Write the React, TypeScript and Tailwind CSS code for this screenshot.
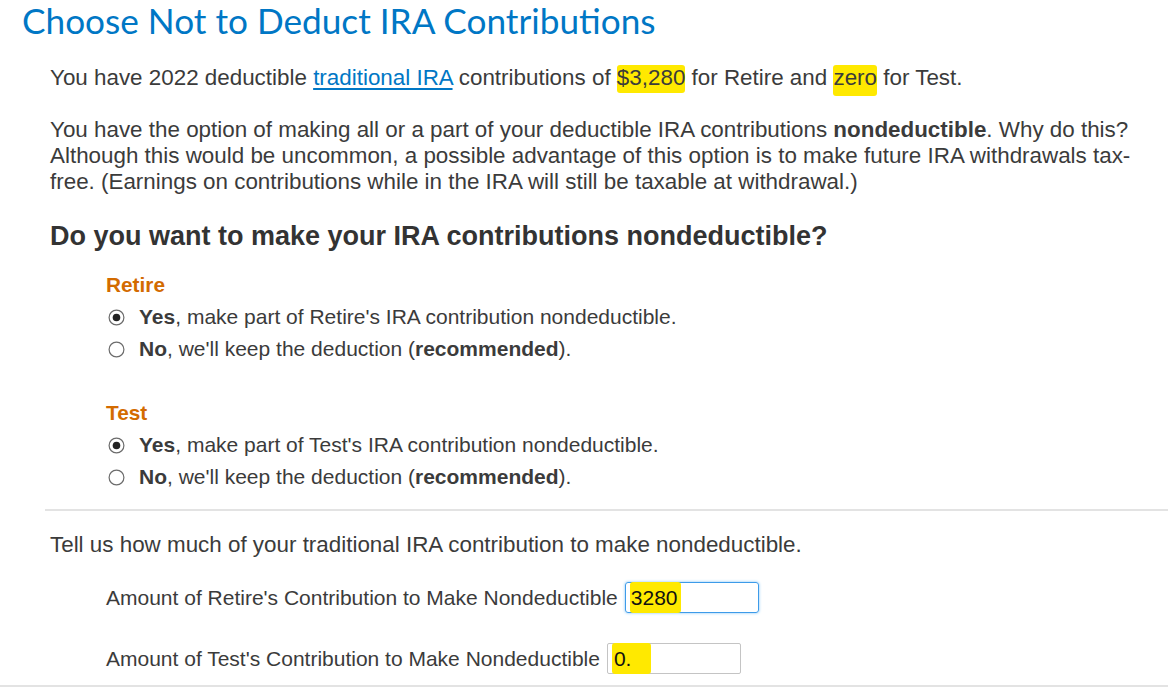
import React from "react"

const body = "font-['Liberation_Sans',Arial,sans-serif] text-[#3b3b3b]"

function Mark({ children, className = "" }: { children: React.ReactNode; className?: string }) {
  return <span className={`bg-[#ffe900] rounded-[3px] ${className}`}>{children}</span>
}

function Radio({ checked }: { checked: boolean }) {
  return (
    <svg width="17" height="17" viewBox="0 0 17 17" className="shrink-0">
      <circle cx="8.5" cy="8.5" r="7.4" fill="#fff" stroke="#6b6b6b" strokeWidth="1.2" />
      {checked && <circle cx="8.5" cy="8.5" r="3.8" fill="#222" />}
    </svg>
  )
}

function Choice({ name, yes }: { name: string; yes: boolean }) {
  return (
    <div className="pl-[106px]">
      <div className="text-[20.8px] leading-[24px] font-bold text-[#d36b00]">{name}</div>
      <div className="mt-[4px] flex flex-col">
        <div className="h-[32px] flex items-center gap-[14px] pl-[2px]">
          <Radio checked={yes} />
          <span className="text-[21px]">
            <b>Yes</b>, make part of {name}'s IRA contribution nondeductible.
          </span>
        </div>
        <div className="h-[32px] flex items-center gap-[14px] pl-[2px]">
          <Radio checked={!yes} />
          <span className="text-[21px]">
            <b>No</b>, we'll keep the deduction (<b>recommended</b>).
          </span>
        </div>
      </div>
    </div>
  )
}

export default function App() {
  return (
    <div className={`w-[1168px] h-[688px] bg-white overflow-hidden ${body}`}>
      <h1 className="pl-[22px] h-[40px] text-[35.2px] leading-[40px] text-[#0077c5] font-['Lato',sans-serif]">
        Choose Not to Deduct IRA Contributions
      </h1>

      <div className="pl-[50px] pr-[20px]">
        <p className="mt-[25px] text-[22.4px] leading-[26px]">
          You have 2022 deductible{" "}
          <span className="text-[#0077c5] underline underline-offset-[3px]">traditional IRA</span>{" "}
          contributions of <Mark className="pb-[3px]">$3,280</Mark> for Retire and{" "}
          <Mark className="pb-[6px]">zero</Mark> for Test.
        </p>
        <p className="mt-[26px] text-[22.4px] leading-[26px]">
          You have the option of making all or a part of your deductible IRA contributions{" "}
          <b>nondeductible</b>. Why do this? Although this would be uncommon, a possible advantage of this
          option is to make future IRA withdrawals tax-free. (Earnings on contributions while in the IRA will
          still be taxable at withdrawal.)
        </p>
        <h2 className="mt-[26px] text-[27px] leading-[30px] font-bold text-[#333]">
          Do you want to make your IRA contributions nondeductible?
        </h2>
      </div>

      <div className="mt-[22px]">
        <Choice name="Retire" yes />
      </div>
      <div className="mt-[36px]">
        <Choice name="Test" yes />
      </div>

      <div className="mt-[16px] ml-[45px] h-[2px] bg-[#e3e3e3]" />

      <p className="mt-[21px] pl-[50px] text-[22.4px] leading-[26px]">
        Tell us how much of your traditional IRA contribution to make nondeductible.
      </p>

      <div className="pl-[106px] mt-[24px] flex items-center gap-[7px] h-[31px]">
        <span className="text-[21px]">Amount of Retire's Contribution to Make Nondeductible</span>
        <div className="w-[134px] h-[31px] border border-[#3d9be9] rounded-[3px] shadow-[0_0_3px_#7cc0f5] flex items-center px-[4px]">
          <Mark className="text-[21px] text-[#111] px-[1px] pr-[3px]">3280</Mark>
        </div>
      </div>

      <div className="pl-[106px] mt-[30px] flex items-center gap-[7px] h-[31px]">
        <span className="text-[21px]">Amount of Test's Contribution to Make Nondeductible</span>
        <div className="w-[134px] h-[31px] border border-[#c4c4c4] rounded-[2px] flex items-center px-[4px]">
          <Mark className="text-[21px] text-[#111] pl-[2px] pr-[20px]">0.</Mark>
        </div>
      </div>

      <div className="mt-[11px] h-[2px] bg-[#e3e3e3]" />
    </div>
  )
}
